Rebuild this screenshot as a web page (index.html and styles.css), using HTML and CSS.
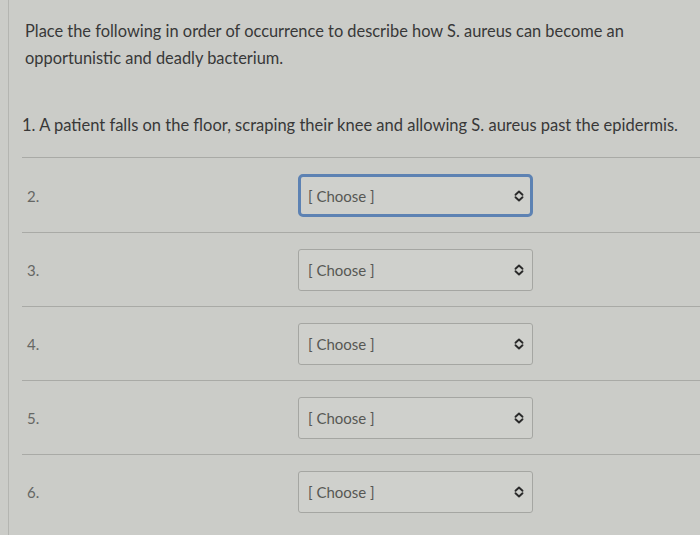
FILE: index.html
```html
<!DOCTYPE html>
<html>
<head>
<meta charset="utf-8">
<link rel="stylesheet" href="styles.css">
</head>
<body>
<div class="page">
  <div class="question">
    <p class="prompt">Place the following in order of occurrence to describe how S. aureus can become an opportunistic and deadly bacterium.</p>
    <p class="first">1. A patient falls on the floor, scraping their knee and allowing S. aureus past the epidermis.</p>
    <div class="rows">
      <div class="row">
        <span class="num">2.</span>
        <div class="select focused"><span class="label">[ Choose ]</span>
          <svg class="caret" width="10" height="12" viewBox="0 0 10 12"><path d="M1.5 4.8 L5 1.5 L8.5 4.8 M1.5 7.2 L5 10.5 L8.5 7.2" fill="none" stroke="#2a2a2a" stroke-width="1.9" stroke-linecap="round" stroke-linejoin="round"/></svg>
        </div>
      </div>
      <div class="row">
        <span class="num">3.</span>
        <div class="select"><span class="label">[ Choose ]</span>
          <svg class="caret" width="10" height="12" viewBox="0 0 10 12"><path d="M1.5 4.8 L5 1.5 L8.5 4.8 M1.5 7.2 L5 10.5 L8.5 7.2" fill="none" stroke="#2a2a2a" stroke-width="1.9" stroke-linecap="round" stroke-linejoin="round"/></svg>
        </div>
      </div>
      <div class="row">
        <span class="num">4.</span>
        <div class="select"><span class="label">[ Choose ]</span>
          <svg class="caret" width="10" height="12" viewBox="0 0 10 12"><path d="M1.5 4.8 L5 1.5 L8.5 4.8 M1.5 7.2 L5 10.5 L8.5 7.2" fill="none" stroke="#2a2a2a" stroke-width="1.9" stroke-linecap="round" stroke-linejoin="round"/></svg>
        </div>
      </div>
      <div class="row">
        <span class="num">5.</span>
        <div class="select"><span class="label">[ Choose ]</span>
          <svg class="caret" width="10" height="12" viewBox="0 0 10 12"><path d="M1.5 4.8 L5 1.5 L8.5 4.8 M1.5 7.2 L5 10.5 L8.5 7.2" fill="none" stroke="#2a2a2a" stroke-width="1.9" stroke-linecap="round" stroke-linejoin="round"/></svg>
        </div>
      </div>
      <div class="row last">
        <span class="num">6.</span>
        <div class="select"><span class="label">[ Choose ]</span>
          <svg class="caret" width="10" height="12" viewBox="0 0 10 12"><path d="M1.5 4.8 L5 1.5 L8.5 4.8 M1.5 7.2 L5 10.5 L8.5 7.2" fill="none" stroke="#2a2a2a" stroke-width="1.9" stroke-linecap="round" stroke-linejoin="round"/></svg>
        </div>
      </div>
    </div>
  </div>
</div>
</body>
</html>
```

FILE: styles.css
```css
html, body {
  margin: 0;
  padding: 0;
  background: #cbccc8;
}
body {
  font-family: Lato, "Open Sans", sans-serif;
  color: #383838;
}
.page {
  height: 535px;
  margin-left: 8px;
  border-left: 1px solid #b4b5b1;
  padding-left: 13px;
  overflow: hidden;
}
.prompt {
  margin: 0;
  padding: 17px 60px 0 3px;
  font-size: 16.4px;
  line-height: 27px;
}
.first {
  margin: 0;
  padding-top: 41px;
  font-size: 16.5px;
  line-height: 26px;
  white-space: nowrap;
}
.rows {
  margin-top: 19px;
  border-top: 1px solid #a9aaa6;
}
.row {
  display: flex;
  align-items: center;
  padding: 16px 0 15px 5px;
  border-bottom: 1px solid #a9aaa6;
}
.row.last {
  border-bottom: none;
}
.num {
  width: 271px;
  font-size: 15px;
  color: #666764;
}
.select {
  box-sizing: border-box;
  width: 235px;
  height: 42px;
  display: flex;
  align-items: center;
  justify-content: space-between;
  padding: 0 8px 0 9px;
  border: 1px solid #a5a6a2;
  border-radius: 3px;
  background: #cfd0cc;
}
.select.focused {
  border: 3px solid #5d82b3;
  border-radius: 5px;
  padding: 0 6px 0 7px;
  height: 43px;
}
.label {
  font-size: 15px;
  color: #575854;
}
.caret {
  display: block;
}
```
